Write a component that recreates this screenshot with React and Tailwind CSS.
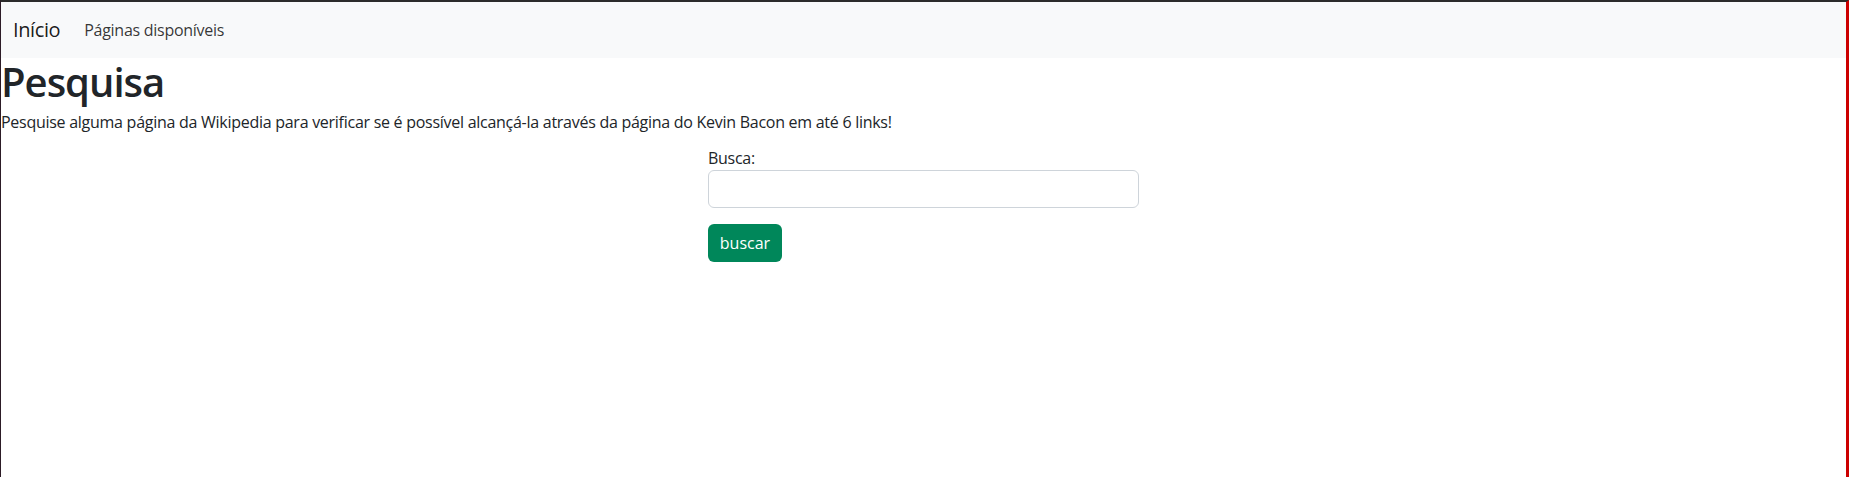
import React, { useState } from 'react';

export default function App() {
    const [busca, setBusca] = useState('');

    return (
        <div className="h-[477px] bg-white border-t-2 border-t-[#2b2b2b] border-l border-l-[#2c1b26] border-r-[3px] border-r-[#cc0000] font-['Open_Sans',sans-serif] tracking-[-0.27px] text-[#212529]">
            {/* navbar */}
            <nav className="h-14 bg-[#f8f9fa] flex items-center px-3">
                <a href="#" className="text-[20px] leading-[30px] tracking-[-0.4px] text-black/90 mr-4">Início</a>
                <a href="#" className="text-base leading-6 px-2 text-black/80">Páginas disponíveis</a>
            </nav>

            <h1 className="text-[40px] font-semibold leading-[1.2] tracking-[-1px] mb-1">Pesquisa</h1>
            <p className="text-base leading-6 mb-3">
                Pesquise alguma página da Wikipedia para verificar se é possível alcançá-la através da página do Kevin Bacon em até 6 links!
            </p>

            <div className="flex justify-center">
                <form className="w-[431px]" onSubmit={(e) => e.preventDefault()}>
                    <label htmlFor="busca" className="block text-base leading-6">Busca:</label>
                    <input
                        id="busca"
                        type="text"
                        value={busca}
                        onChange={(e) => setBusca(e.target.value)}
                        className="block w-full h-[38px] px-3 border border-[#ced4da] rounded-md bg-white text-base"
                    />
                    <button type="submit" className="mt-4 h-[38px] w-[74px] rounded-md bg-[#00875a] text-white text-base tracking-normal">
                        buscar
                    </button>
                </form>
            </div>
        </div>
    );
}
